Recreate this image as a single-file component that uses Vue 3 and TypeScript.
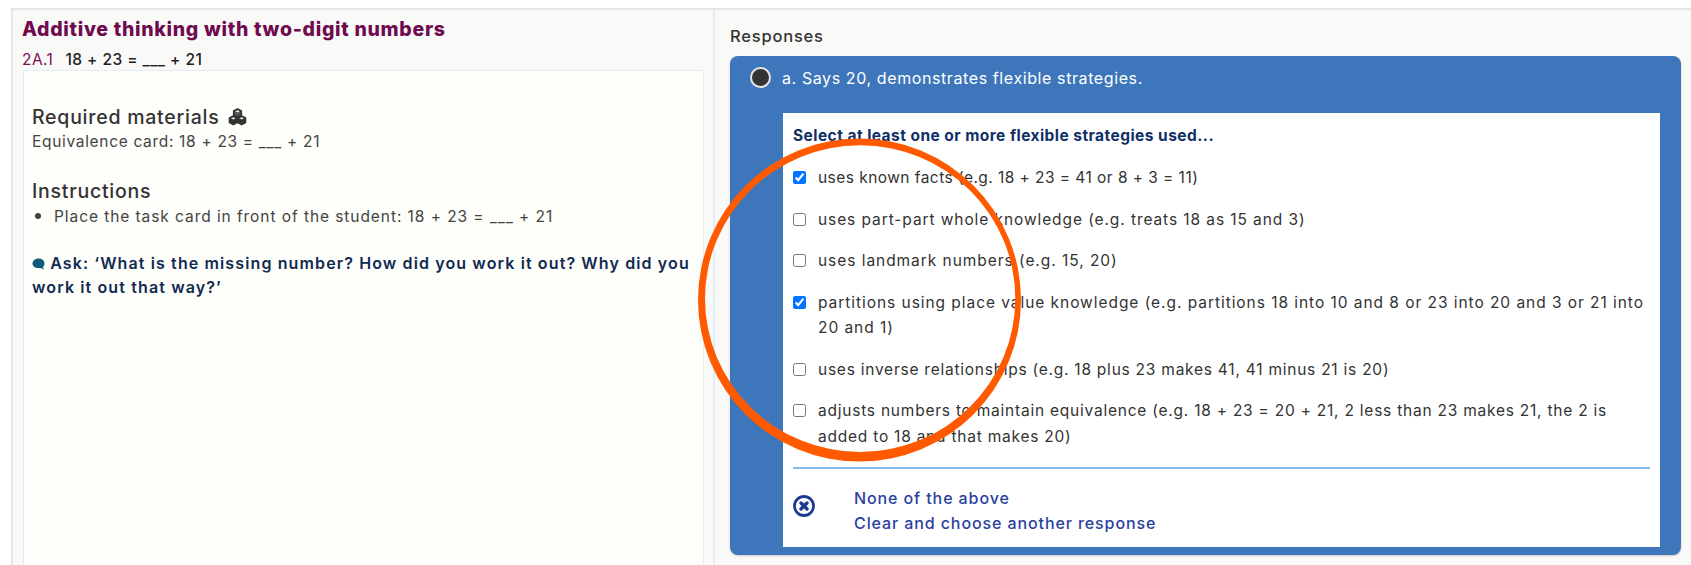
<script setup lang="ts">
interface Strategy { text: string; checked: boolean; spacing: number }
const strategies: Strategy[] = [
  { text: 'uses known facts (e.g. 18 + 23 = 41 or 8 + 3 = 11)', checked: true, spacing: 0.45 },
  { text: 'uses part-part whole knowledge (e.g. treats 18 as 15 and 3)', checked: false, spacing: 0.91 },
  { text: 'uses landmark numbers (e.g. 15, 20)', checked: false, spacing: 0.95 },
  { text: 'partitions using place value knowledge (e.g. partitions 18 into 10 and 8 or 23 into 20 and 3 or 21 into 20 and 1)', checked: true, spacing: 0.95 },
  { text: 'uses inverse relationships (e.g. 18 plus 23 makes 41, 41 minus 21 is 20)', checked: false, spacing: 0.76 },
  { text: 'adjusts numbers to maintain equivalence (e.g. 18 + 23 = 20 + 21, 2 less than 23 makes 21, the 2 is added to 18 and that makes 20)', checked: false, spacing: 0.77 },
]
</script>

<template>
  <div class="page">
    <div class="frame">
      <section class="left">
        <h1 class="title">Additive thinking with two-digit numbers</h1>
        <div class="task"><span class="code">2A.1</span><span>18 + 23 = ___ + 21</span></div>
        <div class="card">
          <h2 class="head">Required materials
            <svg class="blocks" width="19" height="18" viewBox="0 0 19 18">
              <g stroke="#333" stroke-width="1.6" stroke-linejoin="round">
                <path fill="#555" d="M9.500 1l3.800 2v4.200l-3.800 2-3.800-2V3z" />
                <path fill="#333" d="M5.300 8l3.800 2v4.600l-3.800 2-3.800-2V10z" />
                <path fill="#333" d="M13.700 8l3.800 2v4.600l-3.800 2-3.800-2V10z" />
              </g>
              <g fill="#e8e8e8">
                <path d="M9.500 2.200l2.300 1.100-2.300 1.200-2.300-1.200z" />
                <path d="M5.300 9.200l2.300 1.100-2.300 1.200L3 10.300z" />
                <path d="M13.700 9.200L16 10.300l-2.300 1.200-2.300-1.200z" />
              </g>
            </svg>
          </h2>
          <p class="materials">Equivalence card: 18 + 23 = ___ + 21</p>
          <h2 class="head instructions">Instructions</h2>
          <ul class="steps"><li>Place the task card in front of the student: 18 + 23 = ___ + 21</li></ul>
          <p class="ask">
            <svg class="bubble" width="13" height="12" viewBox="0 0 13 12"><path fill="#0f5a78" d="M6.500.5c3.300 0 6 2.100 6 4.900 0 1.600-.8 2.800-1.700 3.600l1.200 2.400-3.600-1.500c-.7.200-1.300.2-1.900.2-3.300 0-6-2-6-4.700S3.200.5 6.500.5z"/></svg>
            Ask: ‘What is the missing number? How did you work it out? Why did you work it out that way?’
          </p>
        </div>
      </section>
      <section class="right">
        <h2 class="resp-title">Responses</h2>
        <div class="resp">
          <div class="resp-head"><span class="radio"></span><span class="resp-label">a. Says 20, demonstrates flexible strategies.</span></div>
          <div class="sheet">
            <p class="prompt">Select at least one or more flexible strategies used...</p>
            <label v-for="s in strategies" :key="s.text" class="opt">
              <input type="checkbox" :checked="s.checked" />
              <span :style="{ letterSpacing: s.spacing + 'px' }">{{ s.text }}</span>
            </label>
            <hr class="rule" />
            <div class="none">
              <svg class="x" width="22" height="22" viewBox="0 0 22 22">
                <circle cx="11" cy="11" r="9.500" fill="none" stroke="#1f3a93" stroke-width="2.800" />
                <path d="M8 8l6 6M14 8l-6 6" stroke="#1f3a93" stroke-width="3.400" stroke-linecap="round" />
              </svg>
              <div class="links"><a>None of the above</a><a>Clear and choose another response</a></div>
            </div>
          </div>
        </div>
      </section>
    </div>
    <svg class="ring" width="340" height="340" viewBox="0 0 340 340"><path fill="#ff5a00" fill-rule="evenodd" d="M8 170a161.500 161.500 0 1 0 323 0a161.500 161.500 0 1 0-323 0zM15 168.650a155.150 153.350 0 1 0 310.300 0a155.150 153.350 0 1 0-310.300 0z" /></svg>
  </div>
</template>

<style>
html, body { margin: 0; background: #fff; overflow: hidden; }
</style>

<style scoped>
.page { position: relative; height: 565px; overflow: hidden; padding: 8px 0 0 11px; box-sizing: border-box; background: #fff; font-family: Inter, "Open Sans", sans-serif; font-size: 15.5px; letter-spacing: 0.45px; line-height: 25px; color: #333; }
.frame { display: flex; height: 557px; border-top: 2px solid #e4e4e4; border-left: 2px solid #e6e6e6; background: #f9f9f7; }
.left { width: 702px; box-sizing: border-box; padding: 8px 9px 0 10px; border-right: 2px solid #e3edf6; display: flex; flex-direction: column; flex: none; }
.title { margin: 0 0 0 -1px; font-size: 19.5px; line-height: 22px; font-weight: 800; color: #6f0a4f; letter-spacing: 0.7px; }
.task { margin: 10px 0 0 -1px; display: flex; gap: 12px; color: #222; font-weight: 500; line-height: 20px; height: 20px; }
.code { color: #7a0f56; font-weight: 400; }
.card { flex: 1; background: #fefefa; border: 1px solid #e2ecf5; padding: 33px 8px 0 8px; }
.head { margin: 0; font-size: 19.5px; font-weight: 500; letter-spacing: .75px; line-height: 26px; color: #333; display: flex; align-items: center; gap: 9px; }
.instructions { margin-top: 24px; }
.materials { margin: 0; line-height: 24px; color: #444; letter-spacing: .68px; }
.steps { margin: 0; padding: 0 0 0 22px; height: 24px; line-height: 22px; color: #444; letter-spacing: 0.93px; }
.steps li::marker { font-size: 20px; }
.ask { margin: 23px 0 0; color: #102a52; font-weight: 600; line-height: 24px; font-size: 16px; letter-spacing: 1.12px; }
.bubble { vertical-align: -1px; }
.right { flex: 1; padding: 14px 10px 0 15px; box-sizing: border-box; min-width: 0; }
.resp-title { margin: 0 0 8px; font-size: 16.5px; font-weight: 500; letter-spacing: .8px; line-height: 24px; color: #333; }
.resp { background: #3d76bb; border-radius: 8px; height: 499px; box-sizing: border-box; padding: 0 21px 8px 53px; box-shadow: 0 1px 2px rgba(0,0,0,.2); display: flex; flex-direction: column; }
.resp-head { height: 57px; flex: none; display: flex; align-items: flex-start; padding-top: 10px; box-sizing: border-box; position: relative; color: #fff; font-size: 16px; letter-spacing: .6px; }
.resp-label { margin-left: -1px; }
.radio { position: absolute; left: -33px; top: 11px; width: 17px; height: 17px; border: 2px solid #e6e6e6; border-radius: 50%; background: #333; }
.sheet { flex: 1; background: #fff; padding: 10px 10px 0; }
.prompt { margin: 0 0 8px; font-weight: 700; color: #0f2f66; line-height: 26px; }
.opt { display: flex; gap: 12px; padding: 8px 0; line-height: 25.500px; }
.opt input { margin: 6px 0 0; width: 13px; height: 13px; flex: none; }
.rule { border: 0; height: 2px; background: #82bcec; margin: 10px 0 0; }
.none { display: flex; margin-top: 17px; gap: 39px; }
.x { margin-top: 9px; flex: none; }
.links { display: flex; flex-direction: column; color: #2a3f9f; line-height: 25px; font-weight: 500; font-size: 16px; letter-spacing: .9px; }
.ring { position: absolute; left: 690px; top: 130px; }
</style>
